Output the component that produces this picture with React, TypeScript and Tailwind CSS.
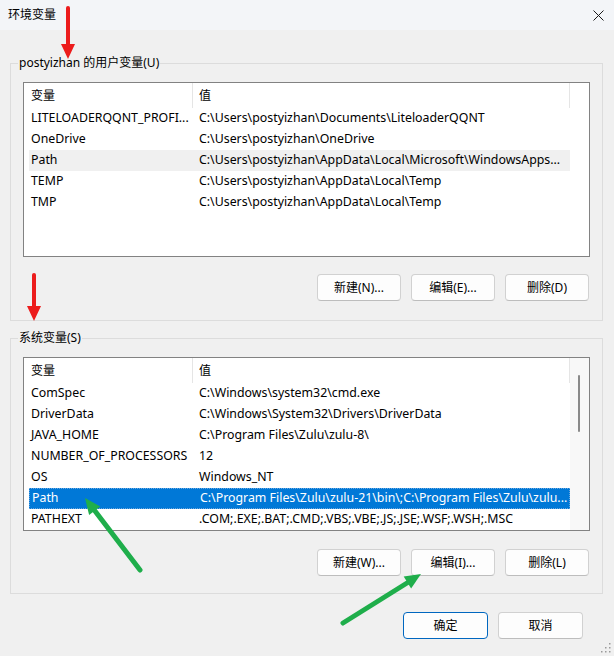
import React from "react";

type Row = { name: string; value: string; state?: "hover" | "selected" };

const userVars: Row[] = [
  { name: "LITELOADERQQNT_PROFI...", value: "C:\\Users\\postyizhan\\Documents\\LiteloaderQQNT" },
  { name: "OneDrive", value: "C:\\Users\\postyizhan\\OneDrive" },
  {
    name: "Path",
    value: "C:\\Users\\postyizhan\\AppData\\Local\\Microsoft\\WindowsApps...",
    state: "hover",
  },
  { name: "TEMP", value: "C:\\Users\\postyizhan\\AppData\\Local\\Temp" },
  { name: "TMP", value: "C:\\Users\\postyizhan\\AppData\\Local\\Temp" },
];

const systemVars: Row[] = [
  { name: "ComSpec", value: "C:\\Windows\\system32\\cmd.exe" },
  { name: "DriverData", value: "C:\\Windows\\System32\\Drivers\\DriverData" },
  { name: "JAVA_HOME", value: "C:\\Program Files\\Zulu\\zulu-8\\" },
  { name: "NUMBER_OF_PROCESSORS", value: "12" },
  { name: "OS", value: "Windows_NT" },
  {
    name: "Path",
    value: "C:\\Program Files\\Zulu\\zulu-21\\bin\\;C:\\Program Files\\Zulu\\zulu...",
    state: "selected",
  },
  { name: "PATHEXT", value: ".COM;.EXE;.BAT;.CMD;.VBS;.VBE;.JS;.JSE;.WSF;.WSH;.MSC" },
];

const btnClass =
  "flex h-[27px] w-[84px] items-center justify-center rounded-[4px] border border-[#d1d1d1] border-b-[#bdbdbd] bg-[#fdfdfd] text-[12px] text-black";

function VarList({ rows, scroll, height }: { rows: Row[]; scroll?: boolean; height: string }) {
  return (
    <div className={`relative flex border border-[#828282] bg-white ${height}`}>
      <div className="flex w-[546px] flex-col">
        <div className="flex h-[25px] shrink-0 items-center">
          <div className="flex h-full w-[169px] items-center border-r border-[#e5e5e5] pl-[7px]">变量</div>
          <div className="flex h-full flex-1 items-center border-r border-[#e5e5e5] pl-[6px]">值</div>
        </div>
        {rows.map((r) => (
          <div
            key={r.name}
            className={`ml-[5px] flex h-[21px] shrink-0 items-center whitespace-nowrap text-[12.35px] ${
              r.state === "selected"
                ? "border border-dotted border-[#6aa8e0] bg-[#0078d7] text-white"
                : r.state === "hover"
                  ? "bg-[#f0f0f0]"
                  : ""
            }`}
          >
            <div className="w-[164px] overflow-hidden pl-[2px]">{r.name}</div>
            <div className="flex-1 overflow-hidden pl-[6px]">{r.value}</div>
          </div>
        ))}
      </div>
      {scroll ? (
        <div className="relative flex-1 bg-[#f8f8f8]">
          <div className="absolute left-[8px] top-[17px] h-[57px] w-[2px] rounded-full bg-[#8a8a8a]" />
        </div>
      ) : null}
    </div>
  );
}

function Group({
  label,
  children,
}: {
  label: string;
  children: React.ReactNode;
}) {
  return (
    <fieldset className="border border-[#dcdcdc] px-[12px]">
      <legend className="-ml-[5px] px-[1px] text-[12px] leading-[16px]">{label}</legend>
      {children}
    </fieldset>
  );
}

function Annotations() {
  return (
    <svg className="pointer-events-none absolute left-0 top-0" width="614" height="656" viewBox="0 0 614 656">
      {/* red markers */}
      <line x1="68" y1="8" x2="68" y2="46" stroke="#ec1c1c" strokeWidth="4" strokeLinecap="round" />
      <polygon points="61,44 75,44 68,59" fill="#ec1c1c" />
      <line x1="34" y1="275" x2="34" y2="308" stroke="#ec1c1c" strokeWidth="4" strokeLinecap="round" />
      <polygon points="27,306 41,306 34,321" fill="#ec1c1c" />
      {/* green markers */}
      <line x1="140" y1="570" x2="95" y2="511" stroke="#1fae4b" strokeWidth="5" strokeLinecap="round" />
      <polygon points="100.3,506.5 89.1,514.9 85,498" fill="#1fae4b" />
      <line x1="343" y1="623" x2="407" y2="583" stroke="#1fae4b" strokeWidth="5" strokeLinecap="round" />
      <polygon points="411.1,588.4 403.7,576.6 421,574" fill="#1fae4b" />
      {/* size grip */}
      {[
        [609, 651],
        [605, 651],
        [609, 647],
        [601, 651],
        [605, 647],
        [609, 643],
      ].map(([x, y]) => (
        <rect key={`${x}-${y}`} x={x} y={y} width="1.5" height="1.5" fill="#9a9a9a" />
      ))}
    </svg>
  );
}

export default function App() {
  return (
    <div
      className="relative h-[656px] w-[614px] overflow-hidden bg-[#f0f0f0] text-[12px] text-black"
      style={{ fontFamily: '"Segoe UI", "Noto Sans", "Noto Sans CJK SC", sans-serif' }}
    >
      <div className="flex h-[30px] items-center justify-between bg-[#f3f5f8] pl-[8px] pr-[10px]">
        <span className="text-[12px]">环境变量</span>
        <svg width="11" height="11" viewBox="0 0 11 11">
          <path d="M0.5 0.5 L10.5 10.5 M10.5 0.5 L0.5 10.5" stroke="#1a1a1a" strokeWidth="1" />
        </svg>
      </div>

      <div className="px-[10px] pr-[11px]">
        <div className="mt-[25px]">
          <Group label="postyizhan 的用户变量(U)">
            <div className="pt-[11px]">
              <VarList rows={userVars} height="h-[175px]" />
            </div>
            <div className="mt-[17px] flex justify-end gap-[10px] pb-[19px] pr-[1px]">
              <button className={btnClass}>新建(N)...</button>
              <button className={btnClass}>编辑(E)...</button>
              <button className={btnClass}>删除(D)</button>
            </div>
          </Group>
        </div>

        <div className="mt-[9px]">
          <Group label="系统变量(S)">
            <div className="pt-[11px]">
              <VarList rows={systemVars} scroll height="h-[174px]" />
            </div>
            <div className="mt-[18px] flex justify-end gap-[10px] pb-[17px] pr-[1px]">
              <button className={btnClass}>新建(W)...</button>
              <button className={btnClass}>编辑(I)...</button>
              <button className={btnClass}>删除(L)</button>
            </div>
          </Group>
        </div>
      </div>

      <div className="mt-[18px] flex justify-end gap-[10px] pr-[31px]">
        <button className={`${btnClass} !w-[85px] !border-[#0067c0]`}>确定</button>
        <button className={`${btnClass} !w-[85px]`}>取消</button>
      </div>

      <Annotations />
    </div>
  );
}
